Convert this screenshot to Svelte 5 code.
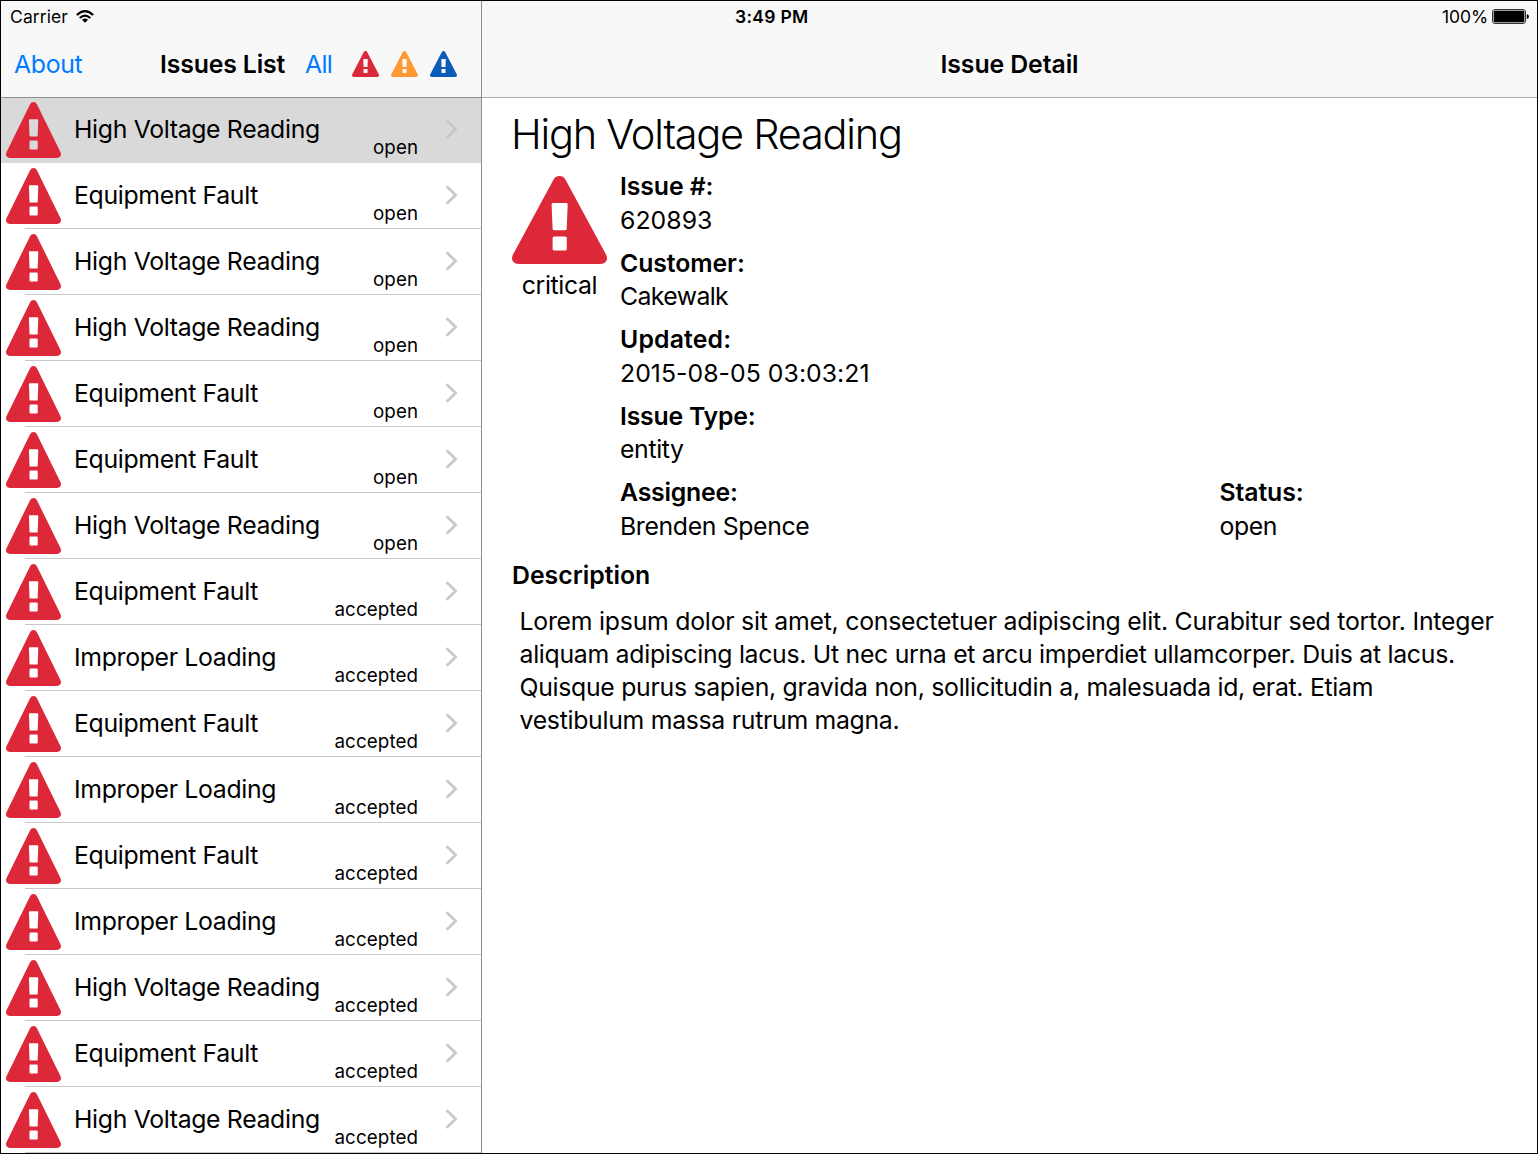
<script>
  const issues = [
    ['High Voltage Reading', 'open'],
    ['Equipment Fault', 'open'],
    ['High Voltage Reading', 'open'],
    ['High Voltage Reading', 'open'],
    ['Equipment Fault', 'open'],
    ['Equipment Fault', 'open'],
    ['High Voltage Reading', 'open'],
    ['Equipment Fault', 'accepted'],
    ['Improper Loading', 'accepted'],
    ['Equipment Fault', 'accepted'],
    ['Improper Loading', 'accepted'],
    ['Equipment Fault', 'accepted'],
    ['Improper Loading', 'accepted'],
    ['High Voltage Reading', 'accepted'],
    ['Equipment Fault', 'accepted'],
    ['High Voltage Reading', 'accepted'],
  ];
  const fields = [
    ['Issue #:', '620893', 'number'],
    ['Customer:', 'Cakewalk', 'customer'],
    ['Updated:', '2015-08-05 03:03:21', 'updated'],
    ['Issue Type:', 'entity', 'type'],
    ['Assignee:', 'Brenden Spence', 'assignee'],
    ['Status:', 'open', 'status'],
  ];
  const description = [
    'Lorem ipsum dolor sit amet, consectetuer adipiscing elit. Curabitur sed tortor. Integer',
    'aliquam adipiscing lacus. Ut nec urna et arcu imperdiet ullamcorper. Duis at lacus.',
    'Quisque purus sapien, gravida non, sollicitudin a, malesuada id, erat. Etiam',
    'vestibulum massa rutrum magna.',
  ];
  const filters = ['critical', 'major', 'minor'];
  let selected = $state(0);
</script>

{#snippet warning(kind)}
  <svg class="warning {kind}" viewBox="0 0 95 88" preserveAspectRatio="none">
    <path
      fill-rule="evenodd"
      d="M41.6 3.4Q43.6 0 47.5 0Q51.4 0 53.4 3.4L94 78.6Q96 82.6 94 85.4Q92 88 88 88H7Q3 88 1 85.4Q-1 82.6 1 78.6ZM41 27Q39.5 27 39.6 28.6L40.6 52.9Q40.7 54.3 42.2 54.3H53Q54.6 54.3 54.7 52.9L55.7 28.6Q55.8 27 54.2 27ZM42.2 60.5Q40.6 60.5 40.6 62V73Q40.6 74.6 42.2 74.6H53.2Q54.8 74.6 54.8 73V62Q54.8 60.5 53.2 60.5Z"
    />
  </svg>
{/snippet}

<div class="screen">
  <aside>
    <header class="bar">
      <div class="status-line">
        <span class="carrier">Carrier</span>
        <svg class="wifi" viewBox="0 0 18 13">
          <path d="M0.8 5Q9-2.8 17.2 5M3.7 8Q9 3.2 14.3 8" fill="none" stroke="#000" stroke-width="2" />
          <path d="M6 9.8Q9 7.4 12 9.8L9 12.8Z" />
        </svg>
      </div>
      <nav>
        <button class="about">About</button>
        <h1 class="list-title">Issues List</h1>
        <button class="all">All</button>
        <div class="filters">
          {#each filters as kind}
            {@render warning(kind)}
          {/each}
        </div>
      </nav>
    </header>
    <ul>
      {#each issues as [title, status], i}
        <li class:selected={selected === i} onclick={() => (selected = i)} role="presentation">
          {@render warning('critical')}
          <span class="title">{title}</span>
          <span class="state">{status}</span>
          <svg class="chevron" viewBox="0 0 13 20"><path d="M1.6 1.3L10.6 10L1.6 18.7" /></svg>
        </li>
      {/each}
    </ul>
  </aside>
  <main>
    <header class="bar">
      <div class="status-line right">
        <span class="time">3:49 PM</span>
        <div class="power">
          <span class="percent">100%</span>
          <svg class="battery" viewBox="0 0 37 15">
            <rect x="0.5" y="0.5" width="33" height="14" rx="2.5" fill="none" stroke="#333" />
            <rect x="1.4" y="1.4" width="31.2" height="12.2" rx="1.5" fill="#aaa" />
            <rect x="1.8" y="1.8" width="30.4" height="11.4" rx="1" />
            <path d="M34.8 5Q37 5.5 37 7.5Q37 9.5 34.8 10Z" />
          </svg>
        </div>
      </div>
      <nav><h1>Issue Detail</h1></nav>
    </header>
    <section class="detail">
      <h2>High Voltage Reading</h2>
      <div class="summary">
        <div class="severity">
          {@render warning('critical')}
          <span>critical</span>
        </div>
        <dl>
          {#each fields as [label, value, key]}
            <div class={key}>
              <dt>{label}</dt>
              <dd>{value}</dd>
            </div>
          {/each}
        </dl>
      </div>
      <h3>Description</h3>
      <p>
        {#each description as line}
          <span>{line}</span>
        {/each}
      </p>
    </section>
  </main>
</div>

<style>
  :global(body) {
    margin: 0;
  }
  .screen {
    box-sizing: border-box;
    width: 1538px;
    height: 1154px;
    border: 1px solid #000;
    display: flex;
    overflow: hidden;
    background: #fff;
    color: #000;
    font-family: Inter, 'Liberation Sans', sans-serif;
    font-size: 24.8px;
    white-space: nowrap;
  }
  h1, h2, h3, p, ul, dl, dd {
    margin: 0;
    padding: 0;
  }
  button {
    font: inherit;
    letter-spacing: -0.3px;
    color: #007aff;
    background: none;
    border: 0;
    padding: 0;
    text-align: left;
  }
  aside {
    width: 480px;
    flex: none;
    border-right: 1px solid #8e8e8e;
  }
  main {
    flex: 1;
    min-width: 0;
  }
  .bar {
    box-sizing: border-box;
    height: 97px;
    background: #f8f8f8;
    border-bottom: 1px solid #acacac;
  }
  aside .bar {
    border-color: #8e8e8e;
  }
  .status-line {
    height: 30px;
    display: flex;
    align-items: center;
    font-size: 17.5px;
    padding-left: 9px;
  }
  .status-line.right {
    padding: 0 8px 0 253px;
    justify-content: space-between;
  }
  .carrier {
    letter-spacing: 0.1px;
  }
  .time {
    font-weight: 600;
    letter-spacing: 0.3px;
  }
  .wifi {
    width: 18px;
    height: 13px;
    margin-left: 8px;
  }
  .power {
    display: flex;
    align-items: center;
    gap: 4px;
  }
  .percent {
    letter-spacing: -0.1px;
  }
  .battery {
    width: 37px;
    height: 15px;
  }
  nav {
    height: 66px;
    display: flex;
    align-items: center;
  }
  h1 {
    font-size: 24.8px;
    font-weight: 600;
    letter-spacing: -0.07px;
  }
  .about {
    box-sizing: border-box;
    width: 146px;
    padding-left: 13px;
  }
  .list-title {
    box-sizing: border-box;
    width: 145px;
    padding-left: 13px;
    letter-spacing: -0.15px;
  }
  .all {
    margin-left: 13px;
    width: 47px;
    letter-spacing: -0.7px;
  }
  .filters {
    display: flex;
    gap: 12px;
  }
  .filters .warning {
    width: 27px;
    height: 26px;
  }
  main nav {
    justify-content: center;
  }
  .warning {
    display: block;
    flex: none;
  }
  .critical {
    fill: #dc2838;
  }
  .major {
    fill: #ff9933;
  }
  .minor {
    fill: #0b5cb8;
  }
  ul {
    list-style: none;
  }
  li {
    box-sizing: border-box;
    height: 66px;
    display: flex;
    align-items: flex-start;
    padding: 5px 23.4px 0 5px;
    background: linear-gradient(#c8c7cc, #c8c7cc) 24px 100% / 456px 1px no-repeat;
  }
  li:first-child {
    height: 65px;
    padding-top: 4px;
  }
  li.selected {
    background: #d9d9d9;
  }
  li .warning {
    width: 55px;
    height: 56px;
  }
  .title {
    margin-left: 13px;
    line-height: 54px;
    letter-spacing: -0.33px;
  }
  .state {
    margin-left: auto;
    margin-right: 26.4px;
    padding-top: 30px;
    line-height: 31px;
    font-size: 18.8px;
    letter-spacing: 0.12px;
  }
  .chevron {
    width: 13px;
    height: 20px;
    margin-top: 17.4px;
    fill: none;
    stroke: #c7c7cc;
    stroke-width: 2.6;
  }
  .detail {
    padding: 11px 30px 0;
  }
  h2 {
    margin-left: -1px;
    font-size: 41.5px;
    font-weight: 300;
    line-height: 50px;
    letter-spacing: -1.25px;
  }
  .summary {
    display: flex;
    padding-top: 11px;
  }
  .severity {
    width: 95px;
    padding-top: 6px;
    text-align: center;
  }
  .severity .warning {
    width: 95px;
    height: 88px;
  }
  .severity span {
    display: block;
    margin-top: 4px;
    line-height: 34px;
    letter-spacing: -0.35px;
  }
  dl {
    flex: 1;
    margin-left: 13px;
    display: grid;
    grid-template-columns: 599.4px 1fr;
    grid-auto-rows: 76.5px;
  }
  dl div {
    grid-column: 1;
  }
  dl .status {
    grid-column: 2;
    grid-row: 5;
  }
  dt, dd {
    line-height: 33.5px;
  }
  dt, h3 {
    font-size: 24.8px;
    font-weight: 600;
  }
  dt {
    letter-spacing: -0.08px;
  }
  .assignee dt, .type dt {
    letter-spacing: -0.2px;
  }
  .updated dt {
    letter-spacing: 0.15px;
  }
  dd {
    letter-spacing: -0.35px;
  }
  .number dd, .updated dd {
    letter-spacing: 0.04px;
  }
  .customer dd {
    letter-spacing: -0.6px;
  }
  h3 {
    margin-top: 5px;
    line-height: 34px;
  }
  p {
    padding: 13px 0 0 7.5px;
  }
  p span {
    display: block;
    line-height: 33px;
    letter-spacing: -0.285px;
  }
  p span:first-child {
    letter-spacing: -0.235px;
  }
</style>
